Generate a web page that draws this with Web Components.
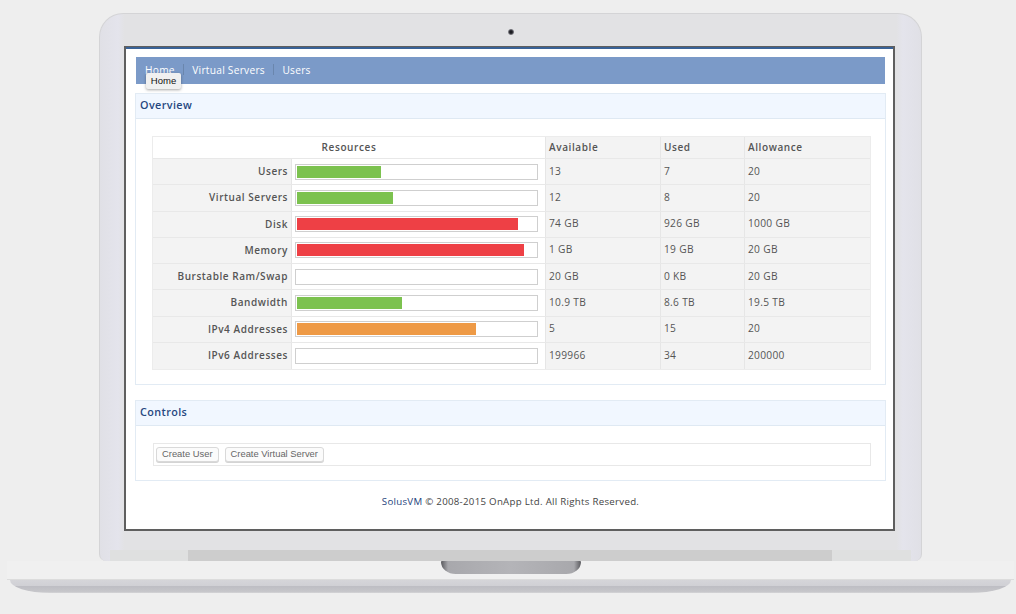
<!DOCTYPE html>
<html lang="en"><head><meta charset="utf-8"><title>SolusVM</title>
<style>
html,body{margin:0;background:#eeeeee;height:100%;overflow:hidden}
body{font-family:"Open Sans",sans-serif}
</style></head>
<body>
<laptop-frame>
  <top-nav>
    <nav-link tip="Home">Home</nav-link>
    <nav-link>Virtual Servers</nav-link>
    <nav-link last>Users</nav-link>
  </top-nav>
  <solus-panel heading="Overview" style="height:292px;margin-top:9px">
    <resource-table>
      <resource-row label="Users" pct="35" color="#7cc24f" available="13" used="7" allowance="20"></resource-row>
      <resource-row label="Virtual Servers" pct="40" color="#7cc24f" available="12" used="8" allowance="20"></resource-row>
      <resource-row label="Disk" pct="92.6" color="#ee4045" available="74 GB" used="926 GB" allowance="1000 GB"></resource-row>
      <resource-row label="Memory" pct="95" color="#ee4045" available="1 GB" used="19 GB" allowance="20 GB"></resource-row>
      <resource-row label="Burstable Ram/Swap" pct="0" color="#7cc24f" available="20 GB" used="0 KB" allowance="20 GB"></resource-row>
      <resource-row label="Bandwidth" pct="44.1" color="#7cc24f" available="10.9 TB" used="8.6 TB" allowance="19.5 TB"></resource-row>
      <resource-row label="IPv4 Addresses" pct="75" color="#ee9a46" available="5" used="15" allowance="20"></resource-row>
      <resource-row label="IPv6 Addresses" pct="0" color="#7cc24f" available="199966" used="34" allowance="200000"></resource-row>
    </resource-table>
  </solus-panel>
  <solus-panel heading="Controls" style="height:81px;margin-top:15px">
    <control-bar>
      <solus-button>Create User</solus-button>
      <solus-button>Create Virtual Server</solus-button>
    </control-bar>
  </solus-panel>
  <page-footer><span slot="brand">SolusVM</span> © 2008-2015 OnApp Ltd. All Rights Reserved.</page-footer>
</laptop-frame>
<script>
function comp(name, css, html){
  class C extends HTMLElement{
    constructor(){super();this.attachShadow({mode:"open"}).innerHTML="<style>"+css+"</style>"+(typeof html==="function"?"":html);}
    connectedCallback(){ if(typeof html==="function"){this.shadowRoot.innerHTML="<style>"+css+"</style>"+html(this);} }
  }
  customElements.define(name,C);
}
comp("laptop-frame",`
:host{display:flex;flex-direction:column;width:1016px;height:614px;box-sizing:border-box;padding-top:13px;background:#eeeeee}
.lid{box-sizing:border-box;width:823px;height:548px;margin-left:99px;border-radius:24px 24px 7px 7px;
  border:1px solid #d4d4d6;border-bottom:0;
  background:linear-gradient(90deg,#e0e0e6 0,#e4e4ec 2.2%,#e2e2e4 3%,#e2e2e4 97%,#e4e4ec 97.8%,#e0e0e6 100%);
  display:flex;flex-direction:column;align-items:center;overflow:hidden}
.top{height:32px;width:100%;display:flex;justify-content:center;align-items:flex-start;flex:none}
.cam{width:6px;height:6px;border-radius:50%;margin-top:15px;background:radial-gradient(circle,#1c1c22 30%,#8a8a90 70%,transparent 100%)}
.screen{box-sizing:border-box;flex:none;width:771px;height:485px;margin-right:2px;background:#fff;
  border:solid #5f5f5f;border-width:1px 2px 2px 2px;box-shadow:inset 0 2px 0 #3a6296;padding:10px 9px 0 10px;display:flex;flex-direction:column}
.chin{flex:1;width:100%;display:flex;flex-direction:column;justify-content:flex-end}
.shelf{height:11px;padding:0 89px 0 88px;background:linear-gradient(90deg,transparent 0,transparent 1.2%,#dfe0e0 1.2%,#dfe0e0 98.8%,transparent 98.8%)}
.shelf div{height:11px;background:#cdcdcd}
.base{flex:none;margin-left:7px;width:1007px;height:32px;display:flex;flex-direction:column}
.slab{height:19px;background:#f0f0f0;display:flex;justify-content:center;align-items:flex-start;flex:none;border-bottom:1px solid #dcdcdc;box-sizing:border-box}
.hinge{width:140px;height:13px;border-radius:1px 1px 16px 16px/1px 1px 13px 13px;
  background:linear-gradient(90deg,#5a5a5e 0,#a8a8ac 5%,#b4b4b8 50%,#a8a8ac 95%,#5a5a5e 100%)}
.under{flex:1;margin:0 3px;background:linear-gradient(#d5d5d9 0,#d0d0d5 45%,#bebec4 50%,#c6c6ca 90%,#d6d6d8 100%);
  border-radius:0 0 40px 40px/0 0 13px 13px}
`,`<div class="lid"><div class="top"><div class="cam"></div></div><div class="screen"><slot></slot></div>
<div class="chin"><div class="shelf"><div></div></div></div></div>
<div class="base"><div class="slab"><div class="hinge"></div></div><div class="under"></div></div>`);

comp("top-nav",`
:host{display:flex;align-items:center;box-sizing:border-box;height:27px;width:749px;flex:none;background:#7b9ac8;padding:0 0 2px 9px;
  font:10.2px "Open Sans",sans-serif;letter-spacing:.25px;color:#fff;position:relative}
`,`<slot></slot>`);

comp("nav-link",`
:host{display:inline-flex;align-items:center;position:relative}
.sep{width:1px;height:11px;background:#6a86ad;margin:0 8.5px 0 8px}
.tip{position:absolute;left:1px;top:10px;width:35px;height:16px;box-sizing:border-box;background:#f0f0f0;color:#111;letter-spacing:0;
  font:9.5px "Liberation Sans",sans-serif;display:flex;align-items:center;justify-content:center;border-radius:2px;
  box-shadow:0 1px 3px rgba(0,0,0,.35)}
`,el=>`<slot></slot>${el.hasAttribute("last")?"":'<span class="sep"></span>'}${el.getAttribute("tip")?`<span class="tip">${el.getAttribute("tip")}</span>`:""}`);

comp("solus-panel",`
:host{display:flex;flex-direction:column;box-sizing:border-box;width:751px;margin-left:-1px;border:1px solid #e2ebf4;flex:none;background:#fff}
header{height:25px;box-sizing:border-box;flex:none;background:#f1f7ff;border-bottom:1px solid #dfe9f3;
  color:#26477f;font:600 10.8px "Open Sans",sans-serif;letter-spacing:.4px;padding:0 0 3px 4px;display:flex;align-items:center}
.body{padding:17px 14px 0 16px;flex:1}
`,el=>`<header>${el.getAttribute("heading")}</header><div class="body"><slot></slot></div>`);

comp("resource-table",`
:host{display:grid;grid-template-rows:22px repeat(8,1fr);height:234px;box-sizing:border-box;width:719px;border:1px solid #ececec;
  font:10px "Open Sans",sans-serif;color:#555}
.head{display:grid;grid-template-columns:392px 115px 84px 1fr;border-bottom:1px solid #e8e8e8;font-weight:600;letter-spacing:.6px;color:#555;font-size:10px}
.head div{display:flex;align-items:center;padding:0 0 2px 3px;background:#f3f3f3;border-left:1px solid #e6e6e6}
.head div:first-child{background:#fff;justify-content:center;border-left:0;padding:0 0 2px}
`,`<div class="head"><div>Resources</div><div>Available</div><div>Used</div><div>Allowance</div></div><slot></slot>`);

comp("resource-row",`
:host{display:grid;grid-template-columns:138px 254px 115px 84px 1fr;border-bottom:1px solid #e8e8e8;min-height:0}
:host(:last-child){border-bottom:0}
.c{display:flex;align-items:center;background:#f3f3f3;border-left:1px solid #e6e6e6;padding:0 0 2px 3px;font-size:10.2px;color:#555;letter-spacing:.3px}
.l{justify-content:flex-end;padding:0 3px 1px 0;border-left:0;font-weight:600;font-size:10px;letter-spacing:.55px}
.b{background:#fff;padding:0 7px 0 3px}
usage-bar{flex:1}
`,el=>{const a=n=>el.getAttribute(n);return `<div class="c l">${a("label")}</div><div class="c b"><usage-bar pct="${a("pct")}" color="${a("color")}"></usage-bar></div><div class="c">${a("available")}</div><div class="c">${a("used")}</div><div class="c">${a("allowance")}</div>`});

comp("usage-bar",`
:host{display:block;box-sizing:border-box;height:16px;border:1px solid #cfcfcf;background:#fff;padding:1px 1px 0 1px}
.f{height:12px;box-shadow:0 0 0 .5px rgba(255,255,255,.5)}
`,el=>`<div class="f" style="width:${el.getAttribute("pct")}%;background:${el.getAttribute("color")}"></div>`);

comp("control-bar",`
:host{display:flex;align-items:center;gap:6px;box-sizing:border-box;width:718px;height:23px;margin-left:1px;border:1px solid #e8e8e8;padding:0 0 0 2px;background:#fff}
`,`<slot></slot>`);

comp("solus-button",`
:host{display:inline-flex;align-items:center;box-sizing:border-box;height:15px;padding:0 5px 2px;border:1px solid #d9d9d9;border-radius:3px;
  background:#fbfbfb;box-shadow:0 1px 0 #d4d4d4;font:9.4px "Liberation Sans",sans-serif;color:#666;white-space:nowrap}
`,`<slot></slot>`);

comp("page-footer",`
:host{display:block;text-align:center;margin:14px 0 0 -1px;width:751px;font:9.7px/13px "Open Sans",sans-serif;color:#444;letter-spacing:.28px}
::slotted([slot=brand]){color:#1d3f7c}
`,`<slot name="brand"></slot><slot></slot>`);
</script>
</body></html>
